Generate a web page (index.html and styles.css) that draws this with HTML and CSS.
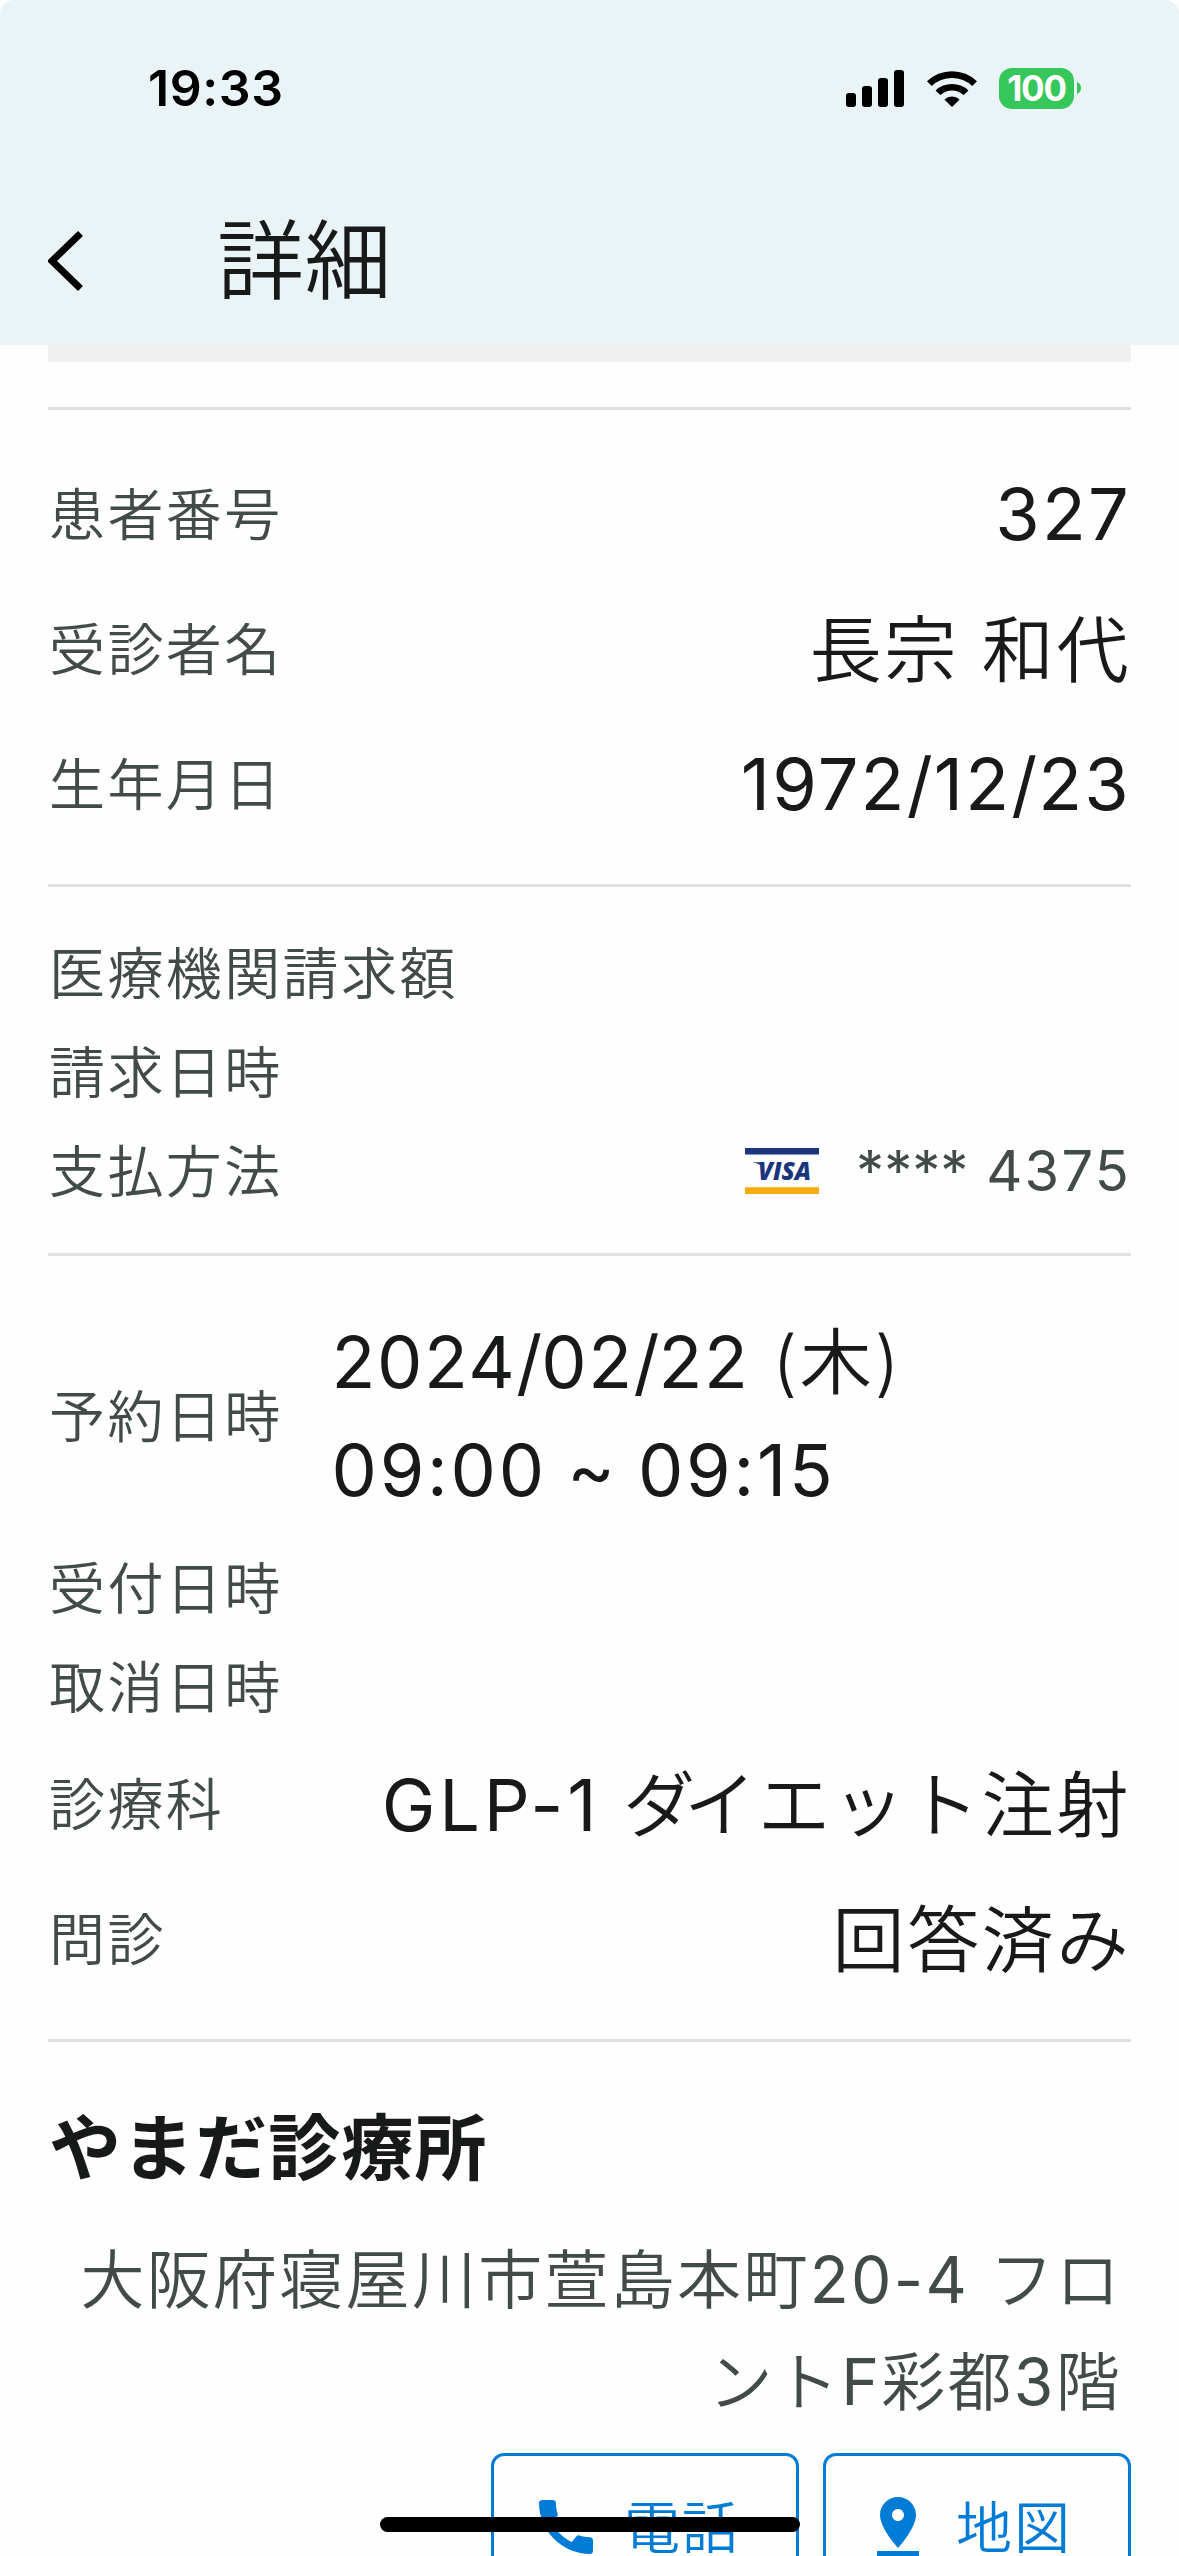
FILE: index.html
```html
<!DOCTYPE html>
<html lang="ja">
<head>
<meta charset="utf-8">
<title>詳細</title>
<link rel="stylesheet" href="styles.css">
</head>
<body>
<div class="screen">
  <header class="header">
    <div class="status">
      <span class="clock">19:33</span>
      <svg class="signal" viewBox="0 0 58 37"><rect x="0" y="23" width="10" height="14" rx="3"/><rect x="16" y="16" width="10" height="21" rx="3"/><rect x="32" y="8" width="10" height="29" rx="3"/><rect x="48" y="0" width="10" height="37" rx="3"/></svg>
      <svg class="wifi" viewBox="0 0 50 37"><path d="M25 37l-7.6-7.6a11.5 11.5 0 0 1 15.2 0z"/><path d="M8.6 20.400a24 24 0 0 1 32.800 0l-4.700 4.700a17 17 0 0 0-23.400 0z"/><path d="M0 11.300a36 36 0 0 1 50 0l-4.700 4.700a29.500 29.500 0 0 0-40.600 0z"/></svg>
      <div class="battery"><span class="battery-level">100</span><svg class="battery-tip" viewBox="0 0 4 12"><path d="M0 0a6.500 6.500 0 0 1 0 12z"/></svg></div>
    </div>
    <div class="appbar">
      <svg class="back" viewBox="0 0 36 60"><path d="M32.500 2.500L4 30l28.500 27.500" /></svg>
      <h1 class="title">詳細</h1>
    </div>
  </header>
  <main class="content">
    <div class="notice"></div>
    <section class="section">
      <div class="row row-lg"><span class="label">患者番号</span><span class="value number">327</span></div>
      <div class="row row-lg"><span class="label">受診者名</span><span class="value">長宗 和代</span></div>
      <div class="row row-lg"><span class="label">生年月日</span><span class="value number">1972<i class="slash">/</i>12<i class="slash">/</i>23</span></div>
    </section>
    <section class="section">
      <div class="row"><span class="label">医療機関請求額</span></div>
      <div class="row"><span class="label">請求日時</span></div>
      <div class="row"><span class="label">支払方法</span>
        <span class="payment">
          <svg class="visa" viewBox="0 0 74 46"><rect width="74" height="6.500" fill="#1a347e"/><rect y="39.200" width="74" height="6.800" fill="#fbab10"/><path d="M8 14.300h7l2 5c-2-3-5-4.300-9-4.700z" fill="#1a347e"/><text class="visa-text" x="13" y="32" textLength="53" lengthAdjust="spacingAndGlyphs">VISA</text></svg>
          <span class="card"><span class="mask">****</span> 4375</span>
        </span>
      </div>
    </section>
    <section class="section">
      <div class="row row-date"><span class="label">予約日時</span><span class="value value-date"><span class="day">2024<i class="slash">/</i>02<i class="slash">/</i>22</span> (木)<br><span class="time">09:00 ~ 09:15</span></span></div>
      <div class="row"><span class="label">受付日時</span></div>
      <div class="row"><span class="label">取消日時</span></div>
      <div class="row row-lg"><span class="label">診療科</span><span class="value"><span class="latin">GLP-1</span> <span class="kern">ダ</span>イエット注射</span></div>
      <div class="row row-lg"><span class="label">問診</span><span class="value">回答済み</span></div>
    </section>
    <section class="clinic">
      <h2 class="clinic-name">やまだ診療所</h2>
      <p class="address">大阪府寝屋川市萱島本町<span class="regular">20-4</span> フロ<br>ント<span class="regular">F</span>彩都<span class="regular">3</span>階</p>
      <div class="actions">
        <button class="action"><svg class="icon" viewBox="0 0 24 24"><path d="M20.010 15.380c-1.230 0-2.420-.2-3.530-.56-.35-.12-.74-.03-1.010.24l-1.570 1.970c-2.830-1.350-5.480-3.900-6.890-6.830l1.950-1.660c.27-.28.35-.67.24-1.020-.37-1.110-.56-2.300-.56-3.530 0-.54-.45-.99-.99-.99H4.190C3.650 3 3 3.240 3 3.990 3 13.280 10.730 21 20.010 21c.71 0 .99-.63.99-1.180v-3.450c0-.54-.45-.99-.99-.99z"/></svg><span class="action-text">電話</span></button>
        <button class="action"><svg class="icon" viewBox="0 0 24 24"><path d="M18 8c0-3.310-2.690-6-6-6S6 4.690 6 8c0 4.500 6 11 6 11s6-6.500 6-11zm-8 0c0-1.100.9-2 2-2s2 .9 2 2-.89 2-2 2c-1.100 0-2-.9-2-2zM5 20v2h14v-2H5z"/></svg><span class="action-text">地図</span></button>
      </div>
    </section>
  </main>
  <div class="home-indicator"></div>
</div>
</body>
</html>
```

FILE: styles.css
```css
* { box-sizing: border-box; }
body {
  margin: 0;
  background: #fefefe;
  font-family: Inter, "Noto Sans CJK JP", sans-serif;
  font-weight: 345;
  color: #171a19;
}
h1, h2, p { margin: 0; font-weight: inherit; }
.screen {
  position: relative;
  width: 1179px;
  height: 2556px;
  overflow: hidden;
  background: #fefefe;
}
.header {
  height: 345px;
  background: #eaf3f5;
  border-radius: 14px 14px 0 0;
}
.status {
  display: flex;
  align-items: center;
  height: 176px;
  padding: 0 98px 0 148px;
}
.clock {
  margin-right: auto;
  font-size: 50px;
  font-weight: 600;
  letter-spacing: .6px;
  color: #000;
}
.signal { width: 58px; height: 37px; margin-right: 23px; }
.wifi { width: 50px; height: 37px; margin-right: 22px; }
.battery { display: flex; align-items: center; gap: 3px; }
.battery-level {
  display: flex;
  align-items: center;
  justify-content: center;
  width: 75px;
  height: 41px;
  border-radius: 13px;
  background: #35c759;
  color: #fff;
  font-size: 35px;
  font-weight: 700;
  letter-spacing: -1.2px;
}
.battery-tip { width: 4px; height: 12px; fill: #35c759; }
.appbar {
  display: flex;
  align-items: center;
  height: 169px;
  padding-left: 48px;
}
.back {
  width: 36px;
  height: 60px;
  margin-right: 133px;
  fill: none;
  stroke: #000;
  stroke-width: 7;
}
.title {
  padding-top: 2px;
  font-size: 87px;
  line-height: 120px;
  letter-spacing: .4px;
}
.content { width: 1083px; margin: 0 auto; }
.notice {
  height: 65px;
  border-bottom: 3px solid #e0e0e0;
  background: linear-gradient(#f0f0f0 17px, transparent 17px);
}
.section {
  padding: 36px 0 33px 1px;
  border-bottom: 3px solid #e0e0e0;
}
.row {
  display: flex;
  align-items: center;
  justify-content: space-between;
  height: 99px;
}
.row-lg { height: 135px; }
.row-date { height: 246px; justify-content: flex-start; }
.label {
  flex: none;
  padding-top: 3px;
  font-size: 56px;
  line-height: 84px;
  letter-spacing: 2.4px;
  color: #424b48;
}
.value {
  padding-top: 3px;
  font-size: 72px;
  line-height: 108px;
  letter-spacing: 2.6px;
  white-space: nowrap;
}
.number { padding-top: 0; font-weight: 390; letter-spacing: 2.2px; }
.slash { font-style: normal; letter-spacing: -1px; }
.number .slash { letter-spacing: 1px; }
.day { font-weight: 390; letter-spacing: 1.5px; }
.time, .latin { font-weight: 390; }
.time { letter-spacing: 2.7px; word-spacing: -2.5px; }
.latin { letter-spacing: 3.8px; }
.regular { font-weight: 390; }
.kern { letter-spacing: -11px; }
.value-date { padding-top: 1px; margin-left: 49px; }
.payment { display: flex; align-items: center; gap: 37px; }
.visa { width: 74px; height: 46px; }
.visa-text {
  font: italic 800 25px "Open Sans", sans-serif;
  fill: #1a347e;
}
.card {
  font-size: 56px;
  font-weight: 390;
  line-height: 84px;
  letter-spacing: 2.2px;
  color: #424b48;
}
.mask { letter-spacing: 0; }
.clinic { padding-top: 52px; }
.clinic-name {
  padding-left: 1px;
  font-size: 72px;
  font-weight: 700;
  line-height: 108px;
  letter-spacing: 1.1px;
}
.address {
  padding-right: 9px;
  margin-top: 27px;
  font-size: 64px;
  line-height: 102px;
  letter-spacing: 2.3px;
  text-align: right;
  color: #424b48;
  white-space: nowrap;
}
.actions {
  display: flex;
  justify-content: flex-end;
  gap: 24px;
  margin-top: 20px;
}
.action {
  display: flex;
  align-items: center;
  width: 308px;
  height: 148px;
  padding: 0 0 0 36px;
  border: 3px solid #007bd6;
  border-radius: 13px;
  background: none;
  color: #007bd6;
  font: inherit;
  font-size: 56px;
  line-height: 72px;
  letter-spacing: 2px;
}
.action-text { padding-top: 2px; }
.icon { width: 72px; height: 72px; margin-right: 22px; fill: currentColor; }
.home-indicator {
  position: absolute;
  left: 380px;
  top: 2517px;
  width: 420px;
  height: 15px;
  border-radius: 8px;
  background: #000;
}
```
